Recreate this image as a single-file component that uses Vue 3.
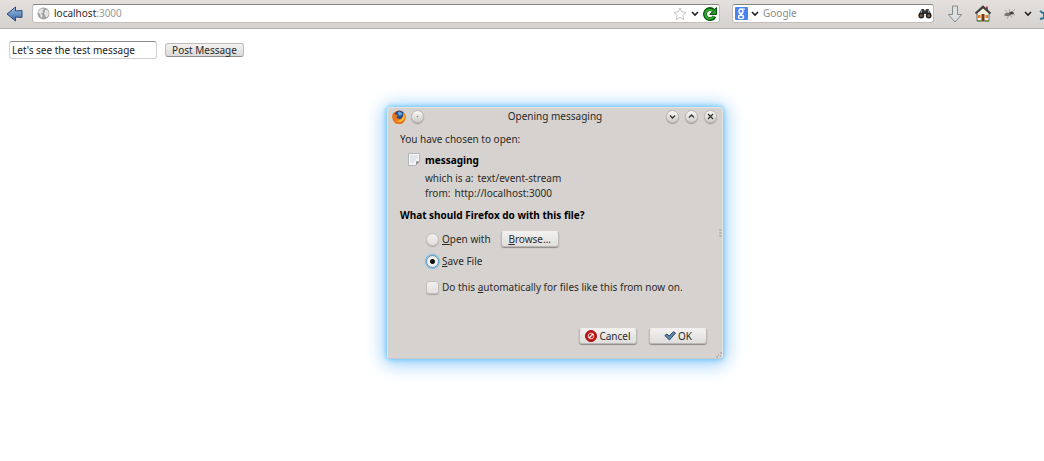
<script setup>
import { ref } from 'vue'

const message = ref("Let's see the test message")
const address = ref('')
const query = ref('')
const choice = ref('save')
const always = ref(false)
</script>

<template>
  <div class="page">
    <header class="toolbar">
      <button class="tool back" type="button" aria-label="Back">
        <svg width="18" height="16" viewBox="0 0 18 16">
          <defs>
            <linearGradient id="blue" x1="0" y1="0" x2="0" y2="1">
              <stop offset="0" stop-color="#a3c2e6" />
              <stop offset="1" stop-color="#3465a4" />
            </linearGradient>
          </defs>
          <path d="M1 8 9.500 1v4l6.500-.5v7L9.500 11v4z" fill="url(#blue)" stroke="#2b4a78" stroke-linejoin="round" />
        </svg>
      </button>

      <div class="field address">
        <svg width="13" height="13" viewBox="0 0 13 13">
          <circle cx="6.500" cy="6.500" r="6" fill="#a3a3a3" />
          <path d="M2 3.500 4.500 1.500 7 2 5.500 4 6 5.500 4 6.500 5.500 8.500 5 11 3.500 9.500 3 7 1 5.500zM8 3l2.500 0 1.500 3-1 3-2 1.500L8 8 6.800 6.500 8 5z" fill="#e4e4e4" />
        </svg>
        <div class="url">
          <input v-model="address" type="text" aria-label="Address" />
          <span class="url-text">localhost<i>:3000</i></span>
        </div>
        <button class="tool" type="button" aria-label="Bookmark this page">
          <svg width="14" height="14" viewBox="0 0 14 14">
            <path d="M7 1 8.800 5 13 5.400 9.800 8.300 10.800 12.600 7 10.300 3.200 12.600 4.200 8.300 1 5.400 5.200 5z" fill="#fff" stroke="#c6c6c6" stroke-linejoin="round" />
          </svg>
        </button>
        <button class="tool" type="button" aria-label="Show history">
          <svg width="8" height="6" viewBox="0 0 8 6">
            <path d="M1 1l3 3 3-3" fill="none" stroke="#222" stroke-width="1.600" />
          </svg>
        </button>
        <button class="tool" type="button" aria-label="Reload">
          <svg width="14" height="14" viewBox="0 0 14 14">
            <path d="M11.500 9.300A5 5 0 1 1 10.300 3.300" fill="none" stroke="#0c5a12" stroke-width="4" />
            <path d="M13.500.5v7H6.800z" fill="#12811a" stroke="#0c5a12" stroke-linejoin="round" />
            <path d="M10.800 9.200A4.500 4.500 0 1 1 10 4" fill="none" stroke="#35ab35" stroke-width="2" />
            <path d="M12.500 3v3.500H9z" fill="#35ab35" />
          </svg>
        </button>
      </div>

      <div class="field search">
        <button class="engine" type="button" aria-label="Search engine">
          <svg width="13" height="13" viewBox="0 0 13 13">
            <rect width="13" height="13" rx="1" fill="#4b83f0" />
            <ellipse cx="6" cy="4.200" rx="2" ry="2.200" fill="none" stroke="#fff" stroke-width="1.400" />
            <path d="M7 2h3M7.200 6 5.500 7.500l2 1" fill="none" stroke="#fff" stroke-width="1.200" />
            <ellipse cx="6" cy="9.900" rx="2.500" ry="1.700" fill="none" stroke="#fff" stroke-width="1.400" />
          </svg>
          <svg width="8" height="6" viewBox="0 0 8 6">
            <path d="M1 1l3 3 3-3" fill="none" stroke="#222" stroke-width="1.600" />
          </svg>
        </button>
        <input v-model="query" type="text" placeholder="Google" aria-label="Search with Google" />
        <button class="tool" type="button" aria-label="Search">
          <svg width="14" height="11" viewBox="0 0 14 11">
            <path d="M3.500 1h2.300l.7 1.500h1L8.200 1h2.300L13 6v3H8V6H6v3H1V6z" fill="#333" />
            <circle cx="3.300" cy="7.500" r="2.900" fill="#222" />
            <circle cx="10.700" cy="7.500" r="2.900" fill="#222" />
            <circle cx="3.300" cy="7.700" r="1.400" fill="#80634c" />
            <circle cx="10.700" cy="7.700" r="1.400" fill="#80634c" />
            <path d="M4 2 3 5M10 2l1 3" stroke="#999" />
          </svg>
        </button>
      </div>

      <nav class="tools" aria-label="Toolbar">
        <button class="tool" type="button" aria-label="Downloads">
          <svg width="16" height="18" viewBox="0 0 16 18">
            <path d="M5.500 1h5v8.500h4.200L8 17 1.300 9.500h4.200z" fill="#dde1e1" stroke="#858b8b" stroke-linejoin="round" />
          </svg>
        </button>
        <button class="tool" type="button" aria-label="Home">
          <svg width="18" height="17" viewBox="0 0 18 17">
            <path d="M3 8 9 3l6 5v8H3z" fill="#f3efdf" stroke="#666" />
            <path d="M12 1.500h2V5h-2z" fill="#b44" />
            <path d="M1.500 8.500 9 1.500l7.500 7" fill="none" stroke="#3c3c3c" stroke-width="1.800" />
            <path d="M7.500 9h3v7h-3z" fill="#713a18" />
            <path d="M4 10h2.500v3H4zM11.500 10H14v3h-2.500z" fill="#e47f26" />
            <path d="M3 16h4M11 16h4" stroke="#4b8a24" />
          </svg>
        </button>
        <div class="extensions">
          <button class="tool" type="button" aria-label="Firebug">
            <svg width="14" height="12" viewBox="0 0 14 12">
              <path d="M2 2l3 4M6 1l1 4M12 1 8 5M1 8l4-2M4 11l2-4M9 10 7 6M12 7 8 5" stroke="#aaa" fill="none" />
              <ellipse cx="4.500" cy="6.500" rx="3" ry="1.700" fill="#777" />
              <ellipse cx="8.500" cy="5" rx="2.400" ry="1.500" fill="#444" />
            </svg>
          </button>
          <button class="tool" type="button" aria-label="Firebug options">
            <svg width="8" height="6" viewBox="0 0 8 6">
              <path d="M1 1l3 3 3-3" fill="none" stroke="#222" stroke-width="1.600" />
            </svg>
          </button>
          <button class="tool" type="button" aria-label="Extension">
            <svg width="12" height="14" viewBox="0 0 12 14">
              <path d="M1 4l3 2h7v5H5l-4 1M5 6v5" fill="none" stroke="#2d7592" stroke-width="2" />
            </svg>
          </button>
        </div>
      </nav>
    </header>

    <main>
      <form class="post" @submit.prevent>
        <input v-model="message" type="text" aria-label="Message" />
        <button type="submit">Post Message</button>
      </form>
    </main>

    <section class="dialog" role="dialog" aria-labelledby="dialog-title">
      <header class="titlebar">
        <svg width="14" height="14" viewBox="0 0 14 14">
          <circle cx="7" cy="7" r="6.500" fill="#d9580c" />
          <circle cx="7.500" cy="5.500" r="4.800" fill="#244f92" />
          <path d="M7 1.500q3 .500 3 3L7.500 6 5.500 3z" fill="#68a9d8" />
          <path d="M1 2.500 3 4.500l3 .5L4.500 7q1.500 3 5 1.500L11 6V2q3 2.500 2.500 6A6.500 6.500 0 0 1 .5 8Q.2 5 1 2.500z" fill="#e9781a" />
          <path d="M12 3.500q2 5-2 7.500-3 1.500-5.500 0Q11 11 12 3.500z" fill="#f8c842" />
        </svg>
        <button class="round" type="button" aria-label="Window menu">
          <svg width="9" height="9" viewBox="0 0 9 9"><circle cx="4.500" cy="4.500" r=".8" fill="#888" /></svg>
        </button>
        <h1 id="dialog-title">Opening messaging</h1>
        <div class="window-buttons">
          <button class="round" type="button" aria-label="Minimize">
            <svg width="9" height="9" viewBox="0 0 9 9"><path d="M2 3.500 4.500 6 7 3.500" /></svg>
          </button>
          <button class="round" type="button" aria-label="Maximize">
            <svg width="9" height="9" viewBox="0 0 9 9"><path d="M2 5.500 4.500 3 7 5.500" /></svg>
          </button>
          <button class="round" type="button" aria-label="Close">
            <svg width="9" height="9" viewBox="0 0 9 9"><path d="M2 2l5 5M7 2 2 7" /></svg>
          </button>
        </div>
      </header>

      <div class="body">
        <p>You have chosen to open:</p>
        <div class="file">
          <svg width="12" height="13" viewBox="0 0 12 13">
            <path d="M.5.5h11v8l-4 4h-7z" fill="#f6f7f8" stroke="#b2b5b8" />
            <path d="M2 3h8M2 5h8M2 7h6M2 9h4" stroke="#ccd4dc" />
            <path d="M11.500 8.500q-2-.5-3.500 0 .5 2-.5 4z" fill="#888" />
          </svg>
          <div>
            <strong>messaging</strong>
            <p class="fact first"><span>which is a:</span><span>text/event-stream</span></p>
            <p class="fact"><span>from:</span><span>http://localhost:3000</span></p>
          </div>
        </div>

        <fieldset>
          <legend>What should Firefox do with this file?</legend>
          <div class="option">
            <input id="open-with" v-model="choice" type="radio" name="choice" value="open" />
            <label for="open-with"><u>O</u>pen with</label>
            <button class="push" type="button"><span><u>B</u>rowse…</span></button>
          </div>
          <div class="option save">
            <input id="save-file" v-model="choice" type="radio" name="choice" value="save" />
            <label for="save-file"><u>S</u>ave File</label>
          </div>
          <div class="option">
            <input id="always" v-model="always" type="checkbox" />
            <label for="always">Do this <u>a</u>utomatically for files like this from now on.</label>
          </div>
        </fieldset>

        <footer>
          <button class="push" type="button">
            <svg width="12" height="12" viewBox="0 0 12 12">
              <circle cx="6" cy="6" r="5.500" fill="#c41818" stroke="#a01010" />
              <circle cx="6" cy="6" r="2.800" fill="none" stroke="#e8c8c8" />
              <path d="M3.800 8.200 8.200 3.800" stroke="#eee" stroke-width="1.400" />
            </svg>
            <span>Cancel</span>
          </button>
          <button class="push" type="button">
            <svg width="12" height="10" viewBox="0 0 12 10">
              <path d="M.8 4.500 3 3l2 2L9.500.8 11.500 2 5.500 9z" fill="#5f86ad" stroke="#2f4c6c" stroke-linejoin="round" />
            </svg>
            <span>OK</span>
          </button>
        </footer>
      </div>

      <svg class="grip side" width="3" height="8" viewBox="0 0 3 8"><path d="M0 1h3M0 4h3M0 7h3" stroke="#aaa6a2" /></svg>
      <svg class="grip corner" width="6" height="6" viewBox="0 0 6 6"><path d="M4 1h2M2 3h1M4 4h1M0 5h2" stroke="#99948f" /></svg>
    </section>
  </div>
</template>

<style>
body {
  margin: 0;
  background: #fff;
}
</style>

<style scoped>
.page {
  position: relative;
  min-height: 100vh;
  overflow: hidden;
  font: 10px/15px "Noto Sans", "Open Sans", sans-serif;
  color: #2c2a28;
}

button,
input {
  margin: 0;
  font: inherit;
  color: inherit;
}

svg {
  display: block;
  flex: none;
}

h1,
p,
fieldset {
  margin: 0;
  padding: 0;
  border: 0;
  font: inherit;
}

.toolbar {
  display: flex;
  align-items: center;
  box-sizing: border-box;
  height: 29px;
  padding: 0 0 1px 6px;
  border-bottom: 1px solid #b5b1ae;
  background: linear-gradient(#e3e0dd, #d6d2cf);
}

.tool,
.engine {
  display: flex;
  flex: none;
  align-items: center;
  padding: 0;
  border: 0;
  background: none;
}

.field {
  display: flex;
  align-items: center;
  box-sizing: border-box;
  height: 19px;
  border: 1px solid #c2bebb;
  border-top-color: #888482;
  border-radius: 3px;
  background: #fff;
}

.address {
  flex: 1;
  gap: 4px;
  margin-left: 8px;
  padding: 0 2px 0 4px;
}

.url {
  position: relative;
  flex: 1;
}

.field input {
  display: block;
  box-sizing: border-box;
  width: 100%;
  height: 15px;
  min-width: 0;
  padding: 0;
  border: 0;
  outline: 0;
  background: none;
}

.field input::placeholder {
  color: #8c8c8c;
  opacity: 1;
}

.url-text {
  position: absolute;
  inset: 0;
  pointer-events: none;
}

.url-text i {
  color: #999;
  font-style: normal;
}

.search {
  width: 202px;
  margin-left: 12px;
  padding: 0 1px 0 2px;
}

.engine {
  gap: 3px;
  margin-right: 4px;
}

.tools {
  display: flex;
  flex: none;
  align-items: center;
  gap: 11px;
  width: 110px;
  padding-left: 13px;
  box-sizing: border-box;
  overflow: hidden;
}

.extensions {
  display: flex;
  flex: none;
  align-items: center;
  gap: 7px;
}

.post {
  display: flex;
  align-items: center;
  gap: 8px;
  padding: 12px 9px;
}

.post input {
  box-sizing: border-box;
  width: 148px;
  height: 18px;
  padding: 0 2px;
  border: 1px solid #d2cfcc;
  border-top-color: #8d8a88;
  border-radius: 3px;
  color: #222;
}

.post button {
  box-sizing: border-box;
  width: 79px;
  height: 14px;
  padding: 0;
  border: 1px solid #c0bcb9;
  border-bottom-color: #8f8b88;
  border-radius: 3px;
  background: linear-gradient(#f3f2f1, #dcdad8);
  line-height: 12px;
  white-space: nowrap;
}

.dialog {
  position: absolute;
  top: 107px;
  left: 387px;
  box-sizing: border-box;
  width: 336px;
  border: 1px solid #e6e4e2;
  border-bottom-color: #c9c9c9;
  border-radius: 4px;
  background: #d6d2cf;
  box-shadow: 0 0 4px 1px #6fc8fb, 0 2px 18px 4px #9fd0fa;
}

.titlebar {
  display: flex;
  align-items: center;
  gap: 5px;
  height: 17px;
  padding: 0 5px 0 4px;
}

.titlebar h1 {
  flex: 1;
  padding-left: 20px;
  text-align: center;
}

.window-buttons {
  display: flex;
  gap: 6px;
}

.round {
  display: flex;
  align-items: center;
  justify-content: center;
  box-sizing: border-box;
  width: 13px;
  height: 13px;
  padding: 0;
  border: 1px solid #bbb7b4;
  border-radius: 50%;
  background: linear-gradient(#f8f8f7, #cfcdcb);
  box-shadow: 0 1px 1px #9b9794;
}

.round path {
  fill: none;
  stroke: #333;
  stroke-width: 1.300;
}

.body {
  padding: 7px 15px 14px 12px;
}

.file {
  display: flex;
  gap: 5px;
  margin-top: 6px;
  padding-left: 8px;
}

.file strong {
  display: block;
  color: #000;
}

.fact {
  display: flex;
  gap: 4px;
}

.first {
  margin-top: 3px;
}

fieldset {
  margin-top: 7px;
}

legend {
  padding: 0;
  color: #000;
  font-weight: bold;
}

.option {
  display: flex;
  align-items: center;
  gap: 3px;
  height: 16px;
  margin-top: 8px;
  padding-left: 26px;
}

.option + .save {
  margin-top: 6px;
}

.save + .option {
  margin-top: 10px;
}

.option input {
  appearance: none;
  box-sizing: border-box;
  width: 13px;
  height: 13px;
  border: 1px solid #c3bfbc;
  border-radius: 3px;
  background: linear-gradient(#f1f0ef, #e2e0de);
  box-shadow: 0 1px 1px #aaa6a3;
}

.option input[type="radio"] {
  border-radius: 50%;
}

.option input[type="radio"]:checked {
  border-color: #4a9ac4;
  background: radial-gradient(circle, #111 2px, #efeeed 3px);
  box-shadow: 0 0 1px 1px #7bbbdc;
}

.push {
  display: flex;
  align-items: center;
  justify-content: center;
  gap: 2px;
  box-sizing: border-box;
  width: 58px;
  height: 16px;
  padding: 0;
  border: 1px solid #bbb7b4;
  border-top-color: #f0efee;
  border-radius: 3px;
  background: linear-gradient(#f2f1f0, #e0dedc);
  box-shadow: 0 1px 1px #8d8986;
}

.option .push {
  margin-left: 7px;
}

footer {
  display: flex;
  justify-content: flex-end;
  gap: 12px;
  margin-top: 33px;
}

.grip {
  position: absolute;
  right: 0;
}

.side {
  top: 121px;
}

.corner {
  bottom: 0;
}
</style>
